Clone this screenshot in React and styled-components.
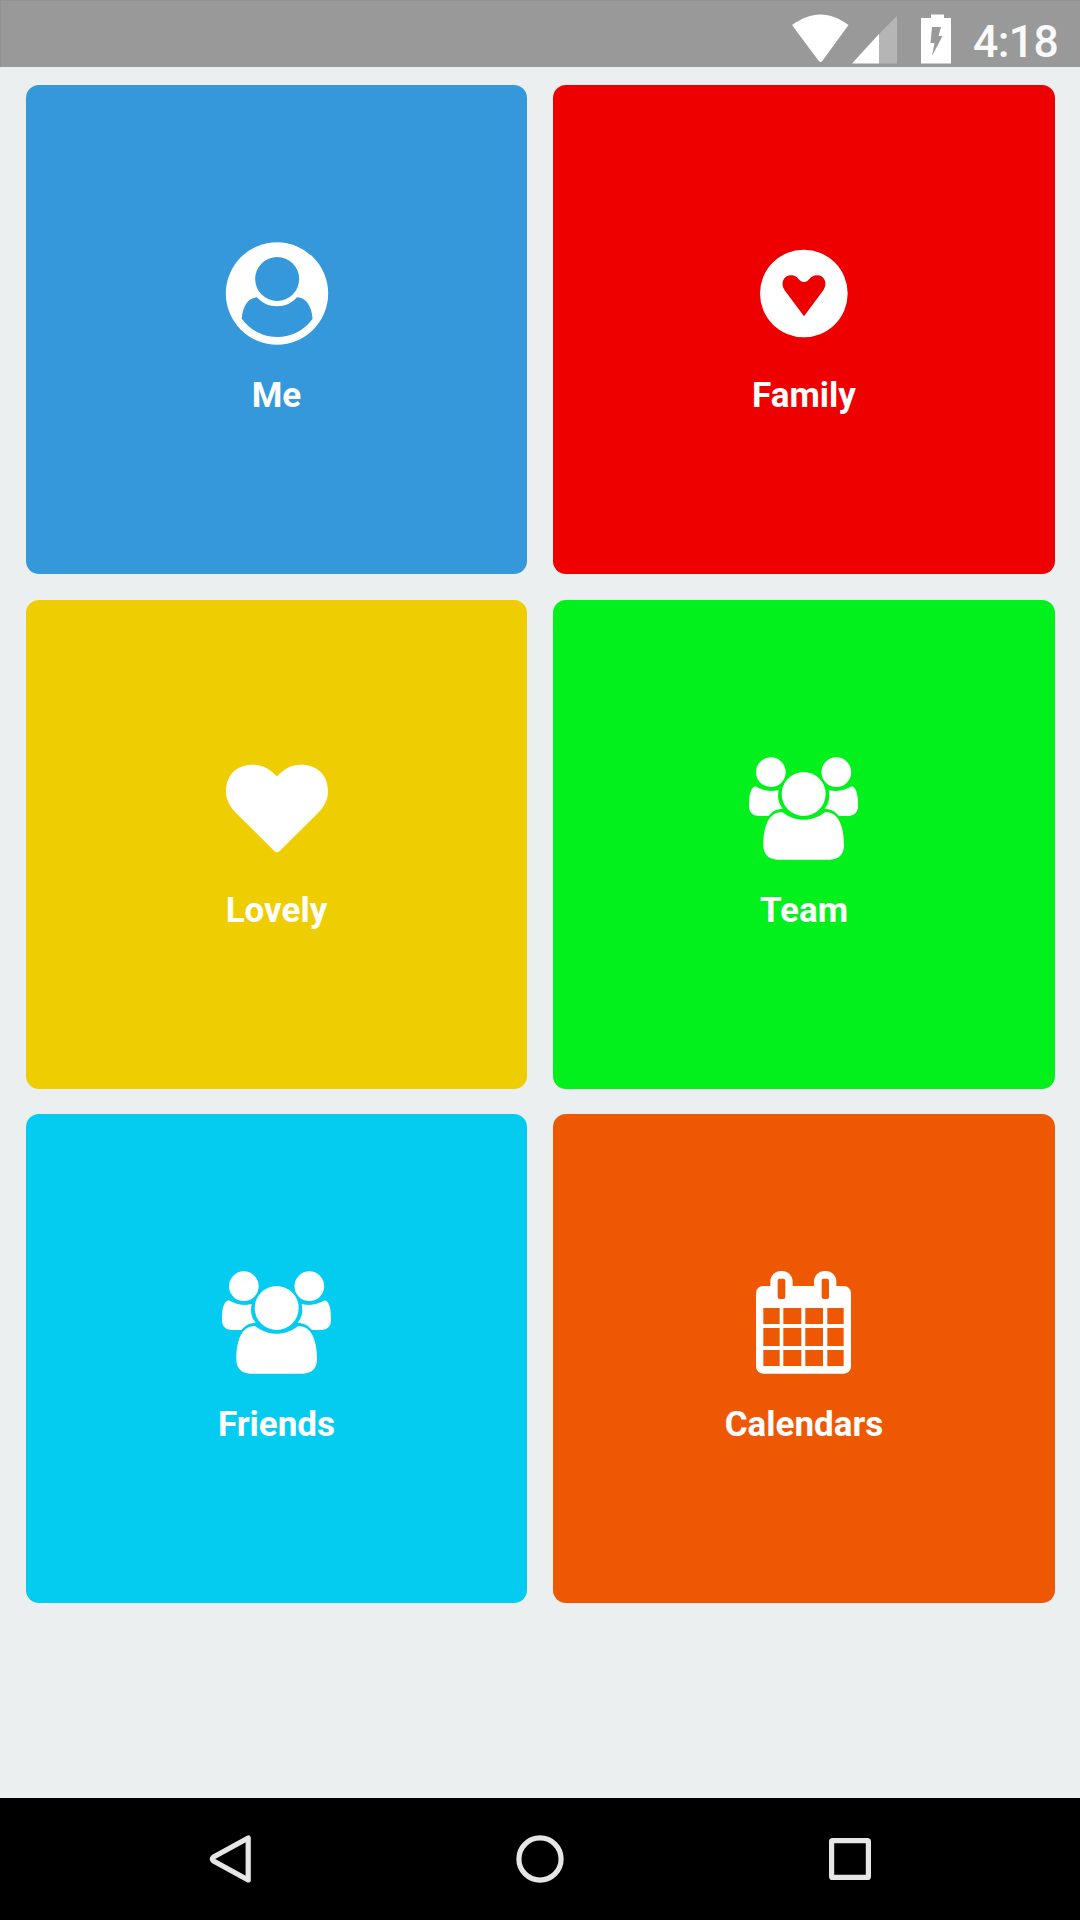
import React from 'react';
import styled, { createGlobalStyle } from 'styled-components';

const GlobalStyle = createGlobalStyle`
  * { box-sizing: border-box; }
  body { margin: 0; background: #ebeff0; }
`;

const Screen = styled.div`
  display: flex;
  flex-direction: column;
  width: 1080px;
  height: 1920px;
  overflow: hidden;
  background: #ebeff0;
  font-family: Roboto, "Liberation Sans", sans-serif;
`;

const StatusBar = styled.header`
  display: flex;
  align-items: flex-start;
  justify-content: flex-end;
  flex: none;
  height: 67px;
  padding-right: 23px;
  background: #999;
  border-top: 1px solid #919191;
  border-left: 1px solid #919191;
`;

const StatusIcon = styled.svg`
  display: block;
  flex: none;
  width: 170px;
  height: 66px;
`;

const Clock = styled.time`
  margin: 15px 0 0 13px;
  width: 84px;
  color: #fafafa;
  font-size: 44.5px;
  font-weight: 500;
  line-height: 52px;
  letter-spacing: -0.6px;
  white-space: nowrap;
`;

const Grid = styled.main`
  display: grid;
  flex: 1;
  grid-template-columns: 501px 502px;
  grid-auto-rows: 489px;
  align-content: start;
  gap: 25.5px 26px;
  padding: 18px 25px 0 26px;
`;

const Tile = styled.section`
  display: flex;
  flex-direction: column;
  align-items: center;
  padding-top: 148px;
  border-radius: 13px;
  background: ${(p) => p.$color};
  color: ${(p) => p.$color};
`;

const TileIcon = styled.svg`
  display: block;
  flex: none;
  width: 120px;
  height: 120px;
  fill: #fff;
`;

const TileLabel = styled.h2`
  margin: 22px 0 0;
  color: #fff;
  font-size: 35px;
  font-weight: 700;
  line-height: 42px;
`;

const NavBar = styled.nav`
  display: flex;
  flex: none;
  height: 122px;
  padding: 0 75px;
  background: #000;
`;

const NavButton = styled.button`
  display: flex;
  flex: 1;
  align-items: center;
  justify-content: center;
  padding: 0;
  border: 0;
  background: none;
`;

const NavIcon = styled.svg`
  display: block;
  width: 60px;
  height: 60px;
  fill: none;
  stroke: #e6e6e6;
  stroke-width: 5.2;
  stroke-linejoin: round;
`;

const MeIcon = () => (
  <TileIcon viewBox="111 39 360 360">
    <circle cx="291" cy="220.5" r="153.5" />
    <circle cx="291.5" cy="177" r="66" fill="currentColor" />
    <path
      fill="currentColor"
      d="M231 232C245 249 267 259 291 259C315 259 337 249 351 232C380 234 394 258 398 296C372 331 335 351 291 351C248 351 211 331 185 296C189 258 203 234 231 232Z"
    />
  </TileIcon>
);

const FamilyIcon = () => (
  <TileIcon viewBox="72 39 360 360">
    <circle cx="251.5" cy="220.5" r="131.5" />
    <path
      fill="currentColor"
      d="M252 289L194 211C180 190 190 166 214 166C235 166 235 186 252 186C269 186 269 166 291 166C314 166 324 190 310 211Z"
    />
  </TileIcon>
);

const HeartIcon = () => (
  <TileIcon viewBox="111 24 360 360">
    <path d="M291 109C309 91 330 74 362 74C414 74 444 106 444 154C444 182 430 204 411 222L299 333Q291 341 283 333L171 222C152 204 138 182 138 154C138 106 168 74 219 74C252 74 273 91 291 109Z" />
  </TileIcon>
);

const PeopleIcon = () => (
  <TileIcon viewBox="132 24 360 360">
    <circle cx="212.5" cy="96.500" r="44.500" />
    <circle cx="409" cy="96.500" r="44.500" />
    <path d="M166 139C194 154 211 155 236 150C231 174 236 192 248 206C228 207 217 214 205 228H177C158 228 147 217 147 198C147 167 150 145 166 139Z" />
    <path d="M456 139C428 154 411 155 386 150C391 174 386 192 374 206C394 207 405 214 417 228H444C463 228 474 217 474 198C474 167 471 145 456 139Z" />
    <circle cx="311" cy="162" r="66" />
    <path d="M246 216C287 247 335 247 376 216C416 216 432 259 432 316C432 343 416 359 390 359H232C206 359 190 343 190 316C190 259 206 216 246 216Z" />
  </TileIcon>
);

const CALENDAR_COLUMNS = [[190, 49], [250, 54], [316, 53], [382, 49]];
const CALENDAR_ROWS = [[174, 48], [234, 54], [300, 48]];

const CalendarIcon = () => (
  <TileIcon viewBox="132 36 360 360">
    <rect x="168" y="108" width="285" height="263" rx="21" />
    <rect x="211" y="63" width="67" height="100" rx="32" />
    <rect x="342" y="63" width="67" height="100" rx="32" />
    <g fill="currentColor">
      <rect x="233" y="86" width="23" height="61" rx="6" />
      <rect x="365" y="86" width="22" height="61" rx="6" />
      {CALENDAR_ROWS.map(([y, height]) =>
        CALENDAR_COLUMNS.map(([x, width]) => (
          <rect key={`${x}-${y}`} x={x} y={y} width={width} height={height} />
        )),
      )}
    </g>
  </TileIcon>
);

const tiles = [
  { label: 'Me', color: '#3498db', Icon: MeIcon },
  { label: 'Family', color: '#ef0000', Icon: FamilyIcon },
  { label: 'Lovely', color: '#eece02', Icon: HeartIcon },
  { label: 'Team', color: '#02f01c', Icon: PeopleIcon },
  { label: 'Friends', color: '#04ccf1', Icon: PeopleIcon },
  { label: 'Calendars', color: '#ee5803', Icon: CalendarIcon },
];

export default function App() {
  return (
    <Screen>
      <GlobalStyle />
      <StatusBar>
        <StatusIcon viewBox="790 1 170 66">
          <path fill="#fff" d="M792 25C802 18 811 14.500 820.500 14.500C830 14.500 839 18 848.500 25L823 60Q820.500 64 818 60Z" />
          <path fill="#b5b5b5" d="M897 16V63.500H878V35Z" />
          <path fill="#fff" d="M879 34V63.500H852Z" />
          <path fill="#fff" d="M931 14.500H944V18H951V63.500H921V18H931Z" />
          <path fill="#999" d="M932 27H941L938.500 36H942.500L932 56L934.500 43H930.500Z" />
        </StatusIcon>
        <Clock>4:18</Clock>
      </StatusBar>
      <Grid>
        {tiles.map(({ label, color, Icon }) => (
          <Tile key={label} $color={color}>
            <Icon />
            <TileLabel>{label}</TileLabel>
          </Tile>
        ))}
      </Grid>
      <NavBar>
        <NavButton aria-label="Back">
          <NavIcon viewBox="200 1829 60 60">
            <path d="M248.200 1838V1880L213.500 1861Q211 1859 213.500 1857Z" />
          </NavIcon>
        </NavButton>
        <NavButton aria-label="Home">
          <NavIcon viewBox="510 1829 60 60">
            <circle cx="540" cy="1859" r="21.100" />
          </NavIcon>
        </NavButton>
        <NavButton aria-label="Recent apps">
          <NavIcon viewBox="820 1829 60 60">
            <rect x="831.600" y="1840.600" width="36.800" height="36.800" rx="1" />
          </NavIcon>
        </NavButton>
      </NavBar>
    </Screen>
  );
}
